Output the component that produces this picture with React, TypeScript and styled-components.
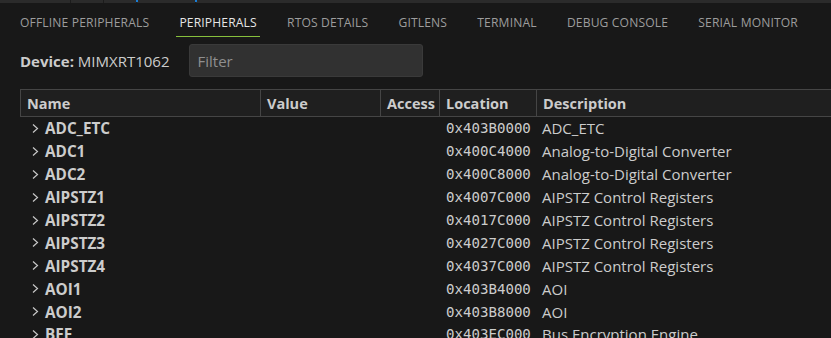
import React from "react";
import styled, { createGlobalStyle } from "styled-components";

const GlobalStyle = createGlobalStyle`
  html, body {
    margin: 0;
    padding: 0;
    background: #181818;
    overflow: hidden;
  }
  body {
    font-family: "Open Sans", "Noto Sans", sans-serif;
    color: #cccccc;
  }
`;

const Page = styled.div`
  width: 831px;
  height: 338px;
  background: #181818;
  overflow: hidden;
  display: flex;
  flex-direction: column;
`;

const TopStrip = styled.div`
  height: 3px;
  display: flex;
  background: #2b2b2b;
`;

const StripSegment = styled.div<{ $w: number; $mark?: boolean }>`
  width: ${(p) => p.$w}px;
  height: 3px;
  border-right: 1px solid #1c1c1c;
  position: relative;
  ${(p) =>
    p.$mark
      ? `
  &::after {
    content: "";
    position: absolute;
    right: -2px;
    top: 0;
    width: 2px;
    height: 2px;
    background: #1a7fd6;
  }`
      : ""}
`;

const TabBar = styled.div`
  display: flex;
  align-items: flex-start;
  padding-left: 17px;
  gap: 24.2px;
`;

const Tab = styled.div<{ $active?: boolean }>`
  height: 16px;
  padding: 12px 3px 5px;
  line-height: 16px;
  font-size: 12.1px;
  letter-spacing: 0.15px;
  white-space: nowrap;
  color: ${(p) => (p.$active ? "#e7e7e7" : "#9d9d9d")};
  border-bottom: 1px solid ${(p) => (p.$active ? "#86bf3c" : "transparent")};
`;

const DeviceRow = styled.div`
  display: flex;
  align-items: center;
  height: 33px;
  margin-top: 7px;
  padding-left: 20px;
  gap: 19px;
`;

const DeviceLabel = styled.div`
  font-size: 15px;
  color: #cccccc;
  white-space: nowrap;
  b {
    font-weight: 700;
  }
`;

const FilterInput = styled.input`
  box-sizing: border-box;
  width: 234px;
  height: 33px;
  background: #313131;
  border: 1px solid #3a3a3a;
  border-radius: 3px;
  padding: 0 8px;
  font-family: "Open Sans", "Noto Sans", sans-serif;
  font-size: 15px;
  color: #cccccc;
  outline: none;
  &::placeholder {
    color: #8f8f8f;
  }
`;

const Table = styled.div`
  margin-top: 12px;
  margin-left: 20px;
  display: flex;
  flex-direction: column;
`;

const columns = "240px 120px 59px 97px 1fr";

const HeaderRow = styled.div`
  display: grid;
  grid-template-columns: ${columns};
  height: 28px;
  box-sizing: border-box;
  background: #1f1f1f;
  border-top: 1px solid #454545;
  border-bottom: 1px solid #454545;
  border-left: 1px solid #454545;
`;

const HeaderCell = styled.div<{ $last?: boolean }>`
  display: flex;
  align-items: center;
  padding-left: 6px;
  font-size: 14.5px;
  font-weight: 700;
  color: #cccccc;
  white-space: nowrap;
  overflow: hidden;
  border-right: ${(p) => (p.$last ? "0" : "1px solid #454545")};
`;

const Row = styled.div`
  display: grid;
  grid-template-columns: ${columns};
  height: 22.9px;
  align-items: center;
`;

const NameCell = styled.div`
  display: flex;
  align-items: center;
  padding-left: 11px;
  gap: 5px;
  font-size: 15.3px;
  font-weight: 700;
  color: #cccccc;
  white-space: nowrap;
`;

const Cell = styled.div`
  white-space: nowrap;
`;

const LocationCell = styled.div`
  padding-left: 7px;
  font-family: "DejaVu Sans Mono", "Liberation Mono", monospace;
  font-size: 14.1px;
  color: #cccccc;
  white-space: nowrap;
`;

const DescCell = styled.div`
  padding-left: 6px;
  font-size: 15px;
  color: #cccccc;
  white-space: nowrap;
`;

const Chevron = () => (
  <svg width="9" height="11" viewBox="0 0 9 11" style={{ flex: "none" }}>
    <path d="M2 1.5 L6.5 5.5 L2 9.5" fill="none" stroke="#c8c8c8" strokeWidth="1.2" />
  </svg>
);

const tabs = [
  "OFFLINE PERIPHERALS",
  "PERIPHERALS",
  "RTOS DETAILS",
  "GITLENS",
  "TERMINAL",
  "DEBUG CONSOLE",
  "SERIAL MONITOR",
];

const rows = [
  ["ADC_ETC", "0x403B0000", "ADC_ETC"],
  ["ADC1", "0x400C4000", "Analog-to-Digital Converter"],
  ["ADC2", "0x400C8000", "Analog-to-Digital Converter"],
  ["AIPSTZ1", "0x4007C000", "AIPSTZ Control Registers"],
  ["AIPSTZ2", "0x4017C000", "AIPSTZ Control Registers"],
  ["AIPSTZ3", "0x4027C000", "AIPSTZ Control Registers"],
  ["AIPSTZ4", "0x4037C000", "AIPSTZ Control Registers"],
  ["AOI1", "0x403B4000", "AOI"],
  ["AOI2", "0x403B8000", "AOI"],
  ["BEE", "0x403EC000", "Bus Encryption Engine"],
];

export default function App() {
  return (
    <>
      <GlobalStyle />
      <Page>
        <TopStrip>
          <StripSegment $w={70} />
          <StripSegment $w={32} />
          <StripSegment $w={32} $mark />
          <StripSegment $w={58} $mark />
        </TopStrip>
        <TabBar>
          {tabs.map((t) => (
            <Tab key={t} $active={t === "PERIPHERALS"}>
              {t}
            </Tab>
          ))}
        </TabBar>
        <DeviceRow>
          <DeviceLabel>
            <b>Device:</b> MIMXRT1062
          </DeviceLabel>
          <FilterInput placeholder="Filter" />
        </DeviceRow>
        <Table>
          <HeaderRow>
            <HeaderCell>Name</HeaderCell>
            <HeaderCell>Value</HeaderCell>
            <HeaderCell>Access</HeaderCell>
            <HeaderCell>Location</HeaderCell>
            <HeaderCell $last>Description</HeaderCell>
          </HeaderRow>
          {rows.map(([name, loc, desc]) => (
            <Row key={name}>
              <NameCell>
                <Chevron />
                {name}
              </NameCell>
              <Cell />
              <Cell />
              <LocationCell>{loc}</LocationCell>
              <DescCell>{desc}</DescCell>
            </Row>
          ))}
        </Table>
      </Page>
    </>
  );
}
